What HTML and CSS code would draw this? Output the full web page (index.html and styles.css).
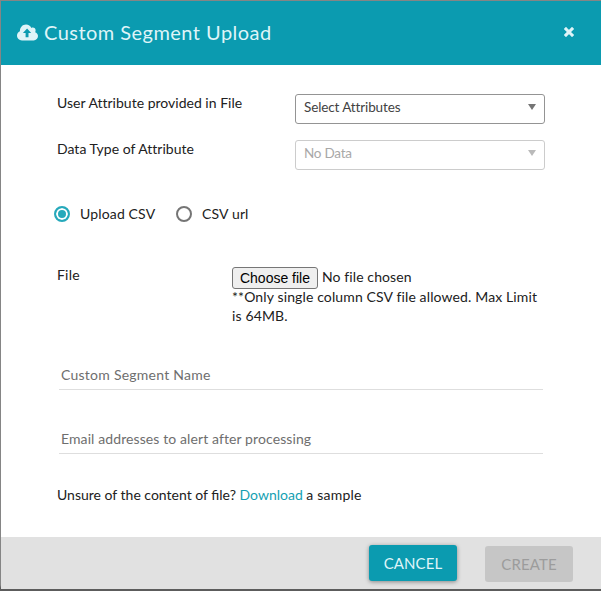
FILE: index.html
```html
<!DOCTYPE html>
<html lang="en">
<head>
<meta charset="utf-8">
<title>Custom Segment Upload</title>
<link rel="stylesheet" href="styles.css">
</head>
<body>
<div class="modal">
  <header class="modal-header">
    <svg class="cloud" viewBox="0 0 21 17" width="21" height="17"><path fill="currentColor" fill-rule="evenodd" d="M5 16.4C2.2 16.4 0 14.3 0 11.6c0-2 1.1-3.6 2.9-4.4C2.9 3.400 5.500.5 9 .5c2.500 0 4.500 1.300 5.400 3.400 2-1 4.400.3 4.200 2.600 0 .7-.2 1.200-.5 1.700 1.700.5 2.900 2 2.900 3.900 0 2.400-1.900 4.300-4.300 4.300zM10.100 4.600 5.900 8.900h2.700v4.300h2.900V8.900h2.700z"/></svg>
    <h1 class="title">Custom Segment Upload</h1>
    <svg class="close" viewBox="0 0 10 10" width="10" height="10"><path d="M2 2l6 6M8 2l-6 6" stroke="currentColor" stroke-width="3.100" stroke-linecap="square"/></svg>
  </header>
  <main class="modal-body">
    <div class="row select-row">
      <span class="label l-user">User Attribute provided in File</span>
      <div class="select"><span class="s-attr">Select Attributes</span><i class="caret"></i></div>
    </div>
    <div class="row select-row">
      <span class="label l-type">Data Type of Attribute</span>
      <div class="select disabled"><span class="s-data">No Data</span><i class="caret"></i></div>
    </div>
    <div class="radios">
      <span class="radio checked"></span><span class="radio-label l-upload">Upload CSV</span>
      <span class="radio"></span><span class="radio-label l-url">CSV url</span>
    </div>
    <div class="file-row">
      <span class="label l-file">File</span>
      <div class="file-field">
        <div class="picker"><button class="choose" type="button">Choose file</button><span class="l-chosen">No file chosen</span></div>
        <div class="note"><span class="l-note">**Only single column CSV file allowed. Max Limit</span><br><span class="l-size">is 64MB.</span></div>
      </div>
    </div>
    <div class="field name"><span class="l-name">Custom Segment Name</span></div>
    <div class="field email"><span class="l-email">Email addresses to alert after processing</span></div>
    <p class="sample"><span class="l-unsure">Unsure of the content of file?</span> <a class="l-download">Download</a> <span class="l-sample">a sample</span></p>
  </main>
  <footer class="modal-footer">
    <button class="btn cancel" type="button">CANCEL</button>
    <button class="btn create" type="button">CREATE</button>
  </footer>
</div>
</body>
</html>
```
FILE: styles.css
```css
* { box-sizing: border-box; }
body {
  margin: 0;
  height: 591px;
  padding: 1px 0 2px 1px;
  background: linear-gradient(#858585 0 585px, #5c5c5c 588px);
  overflow: hidden;
  font: 14px/19px Lato, "Liberation Sans", sans-serif;
  letter-spacing: .2px;
  color: #212121;
}
.modal { height: 588px; display: flex; flex-direction: column; background: #fff; }
.modal-header {
  height: 64px;
  padding: 0 27px 0 16px;
  display: flex;
  align-items: center;
  background: #0b9bb0;
  color: #dff4f8;
}
.cloud { margin-top: -1px; }
.title { margin: -2px auto 0 6px; font-size: 20px; line-height: 26px; font-weight: 400; letter-spacing: .46px; white-space: nowrap; }
.close { margin-top: -3px; }
.modal-body { flex: 1; padding: 28px 56px 0 56px; }
.row { display: flex; justify-content: space-between; height: 46px; }
.l-user, .l-type { letter-spacing: .01px; }
.select {
  width: 250px;
  height: 30px;
  margin-top: 1px;
  padding: 0 8px 4px 8px;
  display: flex;
  align-items: center;
  justify-content: space-between;
  border: 1px solid #949494;
  border-radius: 3px;
  color: #424242;
}
.s-attr, .s-data { margin-top: 1px; font-size: 13.5px; letter-spacing: -.12px; }
.s-data { letter-spacing: -.25px; }
.caret { border: 4px solid transparent; border-top: 6px solid #757575; border-bottom: 0; }
.disabled { border-color: #ccc; color: #a8a8a8; }
.disabled .caret { border-top-color: #bababa; }
.radios { display: flex; align-items: center; height: 20px; margin: 19px 0 0 -3px; }
.radio { width: 16px; height: 16px; border: 2px solid #757575; border-radius: 50%; margin-right: 10px; }
.radio.checked { border-color: #26a9bb; background: #26a9bb; box-shadow: inset 0 0 0 2px #fff; }
.radio-label { margin-top: -1px; letter-spacing: .15px; }
.radio-label.l-upload { width: 96px; }
.file-row { display: flex; margin-top: 41px; height: 60px; }
.file-row .label { width: 175px; }
.picker { display: flex; height: 22px; gap: 4px; margin-top: 2px; }
.l-chosen { letter-spacing: .1px; }
.choose {
  width: 86px;
  height: 22px;
  padding: 0;
  border: 1px solid #767676;
  border-radius: 3px;
  background: #efefef;
  color: #000;
  font: 14px/18px "Liberation Sans", Arial, sans-serif;
}
.note { margin-top: -2px; white-space: nowrap; letter-spacing: .13px; }
.field { margin-left: 2px; width: 484px; padding-left: 2px; border-bottom: 1px solid #dedede; color: #6e6e6e; }
.name { margin-top: 40px; height: 25px; letter-spacing: .25px; }
.email { margin-top: 39px; height: 25px; letter-spacing: .1px; }
.sample { margin: 31px 0 0; white-space: nowrap; letter-spacing: 0; }
.sample a { color: #159fb3; letter-spacing: 0; }
.l-sample { letter-spacing: .2px; }
.modal-footer { height: 52px; padding: 8px 28px 0 0; display: flex; justify-content: flex-end; gap: 28px; background: #e1e1e1; }
.btn { width: 88px; height: 36px; padding: 0; border: 0; border-radius: 3px; font: 15px/35px Lato, sans-serif; letter-spacing: .1px; }
.cancel { background: #0b9bb0; color: #dff4f8; box-shadow: 0 1px 4px rgba(0, 0, 0, .4); }
.create { margin-top: 1px; background: #c6c6c6; color: #9c9c9c; }
```
